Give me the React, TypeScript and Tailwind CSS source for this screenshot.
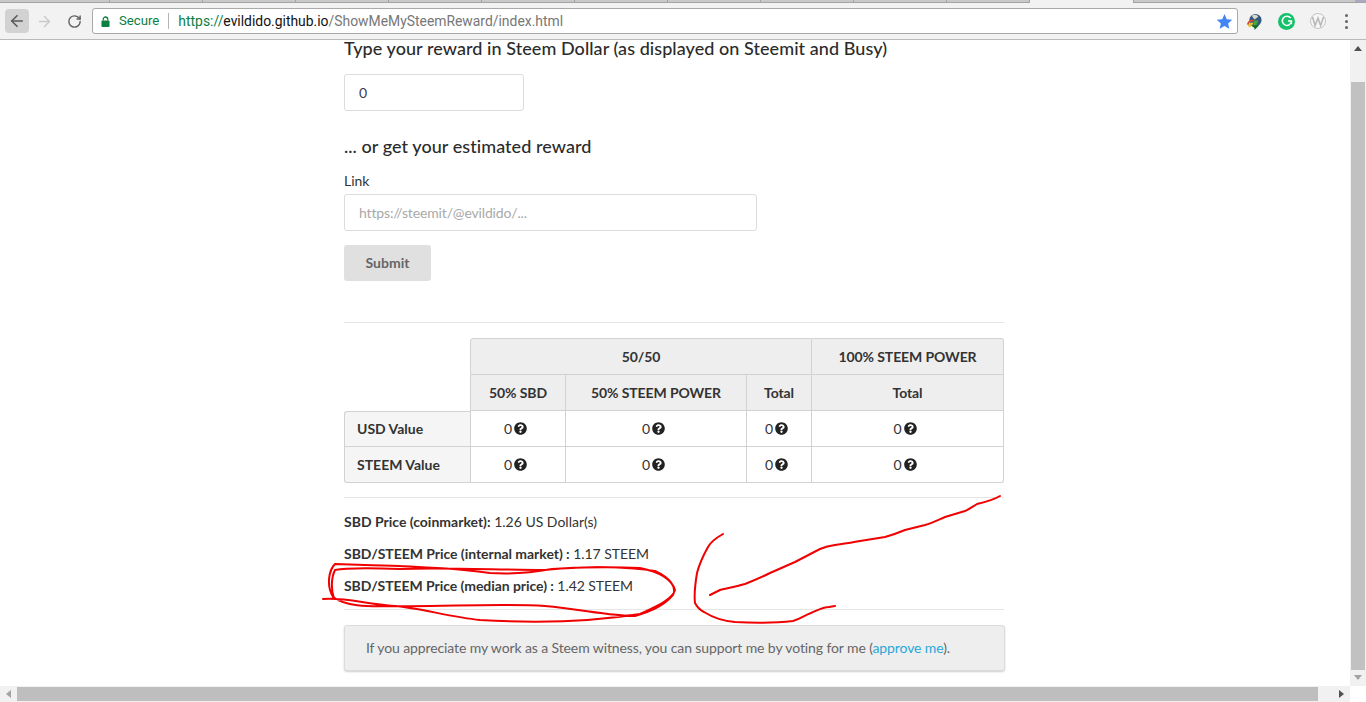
import React from 'react';
import { ArrowLeft, ArrowRight, RotateCw } from 'lucide-react';
import { FaQuestionCircle } from 'react-icons/fa';

const tabs = [110, 204, 297, 390, 483, 576, 670, 762, 855, 948];

const Zero: React.FC = () => (
  <span className="inline-flex items-center gap-[2px] pr-[5px]">
    0
    <FaQuestionCircle className="text-[#222] w-[13px] h-[13px]" />
  </span>
);

const BrowserBar: React.FC = () => (
  <div className="h-10 shrink-0 bg-[#f2f2f2] border-b border-[#b9b9b9] flex flex-col">
    <div className="h-[3px] flex">
      <div className="w-[1030px] bg-[#c9c9c9] border-b border-[#a3a3a3] border-r flex">
        <span className="w-[17px]" />
        {tabs.map((x) => (
          <span key={x} className="w-[93px] border-r border-[#a3a3a3]" />
        ))}
      </div>
      <div className="w-[103px]" />
      <div className="flex-1 bg-[#c9c9c9] border-b border-l border-[#a3a3a3] flex justify-end">
        <span className="w-[11px] bg-[#a9a9c0]" />
      </div>
    </div>
    <div className="flex-1 flex items-center pl-[5px] pr-[11px]">
      <div className="w-6 h-6 bg-[#d2d2d2] rounded-sm flex items-center justify-center">
        <ArrowLeft className="w-[18px] h-[18px] text-[#5a5a5a]" strokeWidth={2.2} />
      </div>
      <div className="w-[31px] flex justify-center">
        <ArrowRight className="w-[17px] h-[17px] text-[#c9c9c9]" strokeWidth={2} />
      </div>
      <div className="w-[28px] flex justify-center mr-1">
        <RotateCw className="w-[15px] h-[15px] text-[#5f5f5f]" strokeWidth={2.2} />
      </div>
      <div className="w-[1146px] h-[26px] bg-white border border-[#a9a9a9] rounded-[3px] flex items-center pl-[8px] pr-[4px] font-['Roboto',sans-serif] text-[13.9px]">
        <svg viewBox="0 0 10 12" className="w-[9px] h-[11px] mr-[9px]">
          <path d="M2.5 5V3.5a2.5 2.5 0 0 1 5 0V5" fill="none" stroke="#0b8043" strokeWidth="1.4" />
          <rect x="0.5" y="5" width="9" height="7" rx="1" fill="#0b8043" />
        </svg>
        <span className="text-[#0b8043] text-[13.2px]">Secure</span>
        <span className="w-px h-[16px] bg-[#b5b5b5] ml-[9px] mr-[9px]" />
        <span className="text-[#0b8043]">https://</span>
        <span className="text-[#111]">evildido.github.io</span>
        <span className="text-[#777]">/ShowMeMySteemReward/index.html</span>
        <svg viewBox="0 0 24 24" className="w-[17px] h-[17px] ml-auto">
          <path d="M12 1.5l3.2 7.2 7.8.8-5.9 5.2 1.7 7.7L12 18.4l-6.8 4 1.7-7.7L1 9.5l7.8-.8z" fill="#4285f4" />
        </svg>
      </div>
      <div className="ml-2 flex-1 flex items-center">
        <svg viewBox="0 0 18 18" className="w-[17px] h-[17px]">
          <circle cx="10" cy="7.5" r="6.5" fill="#33597f" />
          <path d="M6 3c3-2 6-1 7 1l-4 3z" fill="#d9d9c6" />
          <path d="M1 12a6 6 0 0 1 7-5l-1 2a4 4 0 0 0-4 4z" fill="#d8483a" />
          <path d="M2 14a5 5 0 0 1 5-4l1 2a3 3 0 0 0-3 3z" fill="#e8c62e" />
          <path d="M5 13h9l-5 5v-2z" fill="#0c6b1d" />
          <path d="M8 8h5l-2 5H8z" fill="#4aa53a" />
        </svg>
        <span className="w-[17px] h-[17px] ml-[15px] rounded-full bg-[#15c26b] flex items-center justify-center">
          <svg viewBox="0 0 12 12" className="w-[12px] h-[12px]">
            <path d="M9.7 3.2A4.6 4.6 0 1 0 10.5 6H7" fill="none" stroke="#fff" strokeWidth="1.5" />
            <path d="M10.5 6v3.2" stroke="#fff" strokeWidth="1.2" />
          </svg>
        </span>
        <span className="w-4 h-4 ml-[15px] rounded-full border border-[#c4c4c4] bg-[#f7f7f7] flex items-center justify-center">
          <svg viewBox="0 0 14 14" className="w-[14px] h-[14px]">
            <path d="M1.5 3l2.6 8.5L7 4l2.6 7.5L12.5 3" fill="none" stroke="#b8b8b8" strokeWidth="1.6" />
          </svg>
        </span>
        <span className="ml-[19px] flex flex-col gap-[3px]">
          <i className="w-[3px] h-[3px] bg-[#666] rounded-full block" />
          <i className="w-[3px] h-[3px] bg-[#666] rounded-full block" />
          <i className="w-[3px] h-[3px] bg-[#666] rounded-full block" />
        </span>
      </div>
    </div>
  </div>
);

const Annotation: React.FC = () => (
  <svg className="absolute left-0 top-0 pointer-events-none" width="1366" height="702" fill="none" stroke="#f00000" strokeWidth="2" strokeLinecap="round" strokeLinejoin="round">
    <path d="M323 599C345 597 365 604 395 606C440 607 500 603 545 606C580 609 610 616 635 616C650 612 665 605 673 595C677 587 670 578 655 571C630 567 590 566 552 569C530 573 505 574 490 573C450 567 400 566 365 565L335 564C329 570 326 585 333 597C345 606 365 607 395 606C420 608 450 617 480 620C530 623 590 622 640 614C655 607 672 600 675 590C672 580 660 572 640 568C600 566 560 568 545 570C500 570 440 567 400 569C370 568 345 568 335 570C331 578 331 590 334 598" />
    <path d="M1000 496C995 499 990 501 977 504C972 507 970 509 965 511L945 517C938 520 932 523 925 525L905 530C898 533 892 535 885 537L860 541C850 543 842 544 835 545C828 546 825 547 820 549L795 562L770 573C762 577 755 580 745 584C735 587 727 588 720 590L710 595" />
    <path d="M723 534C716 538 710 543 708 547C703 556 699 565 697 573C695 585 694 595 695 603C697 607 700 610 704 612C712 617 722 621 735 622C755 623 775 623 793 621C800 619 805 615 811 613C818 610 823 607 829 607L835 606" />
  </svg>
);

const th = 'bg-[#eeeeee] border-[#d2d2d2] font-bold text-center align-middle tracking-[-0.1px]';
const td = 'border-[#d2d2d2] border-r border-b text-center align-middle';

const RewardTable: React.FC = () => (
  <table className="w-[660px] table-fixed border-separate border-spacing-0 text-[14px] text-[#333] mt-[15px]">
    <colgroup>
      <col className="w-[126px]" />
      <col className="w-[96px]" />
      <col className="w-[181px]" />
      <col className="w-[65px]" />
      <col className="w-[192px]" />
    </colgroup>
    <tbody>
      <tr className="h-[37px]">
        <td />
        <th colSpan={3} className={`${th} border-t border-l border-r border-b rounded-tl-[3px]`}>50/50</th>
        <th className={`${th} border-t border-r border-b rounded-tr-[3px]`}>100% STEEM POWER</th>
      </tr>
      <tr className="h-9">
        <td />
        <th className={`${th} border-l border-r border-b`}>50% SBD</th>
        <th className={`${th} border-r border-b`}>50% STEEM POWER</th>
        <th className={`${th} border-r border-b`}>Total</th>
        <th className={`${th} border-r border-b`}>Total</th>
      </tr>
      <tr className="h-9">
        <th className="bg-[#f5f5f5] border-l border-t border-b border-[#d2d2d2] text-left pl-3 pb-[2px] font-bold rounded-tl-[3px]">USD Value</th>
        <td className={`${td} border-l`}><Zero /></td>
        <td className={td}><Zero /></td>
        <td className={td}><Zero /></td>
        <td className={td}><Zero /></td>
      </tr>
      <tr className="h-9">
        <th className="bg-[#f5f5f5] border-l border-b border-[#d2d2d2] text-left pl-3 font-bold rounded-bl-[3px]">STEEM Value</th>
        <td className={`${td} border-l`}><Zero /></td>
        <td className={td}><Zero /></td>
        <td className={td}><Zero /></td>
        <td className={`${td} rounded-br-[3px]`}><Zero /></td>
      </tr>
    </tbody>
  </table>
);

const App: React.FC = () => (
  <div className="relative w-[1366px] h-[702px] overflow-hidden bg-white flex flex-col font-['Lato',sans-serif] text-[#333]">
    <BrowserBar />
    <div className="flex-1 flex min-h-0">
      <main className="flex-1 pl-[344px]">
        <div className="w-[660px] text-[14px]">
          <h3 className="mt-px text-[18px] leading-[14px] font-medium text-[#2b2b2b] tracking-[0.06px]">
            Type your reward in Steem Dollar (as displayed on Steemit and Busy)
          </h3>
          <div className="w-[180px] h-[37px] mt-[19px] border border-[#dcdcdc] rounded-[3px] flex items-center pl-[14px] text-[#3a3a55]">0</div>
          <h4 className="text-[18px] leading-[18px] font-medium text-[#2b2b2b] mt-[26px] tracking-[0.06px]">... or get your estimated reward</h4>
          <div className="mt-[16px] leading-[20px] text-[#333]">Link</div>
          <div className="w-[413px] h-[37px] mt-[3px] border border-[#dcdcdc] rounded-[3px] flex items-center pl-[14px] text-[#a9a9a9] tracking-[-0.15px]">
            https://steemit/@evildido/...
          </div>
          <button className="w-[87px] h-9 mt-[14px] pb-[2px] bg-[#e0e0e0] rounded-[3px] font-bold text-[#666] text-[14px]">Submit</button>
          <hr className="mt-[41px] border-[#e6e6e6]" />
          <RewardTable />
          <hr className="mt-[14px] border-[#e6e6e6]" />
          <p className="mt-[14px] leading-5"><b>SBD Price (coinmarket):</b> 1.26 US Dollar(s)</p>
          <p className="mt-3 leading-5 tracking-[-0.04px]"><b>SBD/STEEM Price (internal market) :</b> 1.17 STEEM</p>
          <p className="mt-3 leading-5 tracking-[-0.06px]"><b>SBD/STEEM Price (median price) :</b> 1.42 STEEM</p>
          <hr className="mt-[13px] border-[#e6e6e6]" />
          <div className="w-[661px] h-[46px] mt-[15px] bg-[#eeeeee] border border-[#dcdcdc] rounded-[3px] shadow-[0_1px_2px_rgba(0,0,0,0.2)] flex items-center pl-[21px] pb-[2px] text-[#666] tracking-[-0.11px]">
            <span>If you appreciate my work as a Steem witness, you can support me by voting for me (<span className="text-[#2aa8d8]">approve me</span>).</span>
          </div>
        </div>
      </main>
      <div className="w-4 bg-[#f1f1f1] flex flex-col items-center">
        <span className="mt-[6px] w-0 h-0 border-x-[4px] border-x-transparent border-b-[5px] border-b-[#505050]" />
        <span className="mt-[31px] w-[14px] flex-1 bg-[#c1c1c1]" />
        <span className="mt-[5px] mb-[6px] w-0 h-0 border-x-[4px] border-x-transparent border-t-[5px] border-t-[#a3a3a3]" />
      </div>
    </div>
    <div className="h-4 shrink-0 flex">
      <div className="w-[1350px] bg-[#f1f1f1] flex items-center">
        <span className="ml-[6px] w-0 h-0 border-y-[4px] border-y-transparent border-r-[5px] border-r-[#a3a3a3]" />
        <span className="ml-[6px] w-[1301px] h-[14px] bg-[#bebebe]" />
        <span className="ml-[21px] w-0 h-0 border-y-[4px] border-y-transparent border-l-[5px] border-l-[#505050]" />
      </div>
    </div>
    <Annotation />
  </div>
);

export default App;
